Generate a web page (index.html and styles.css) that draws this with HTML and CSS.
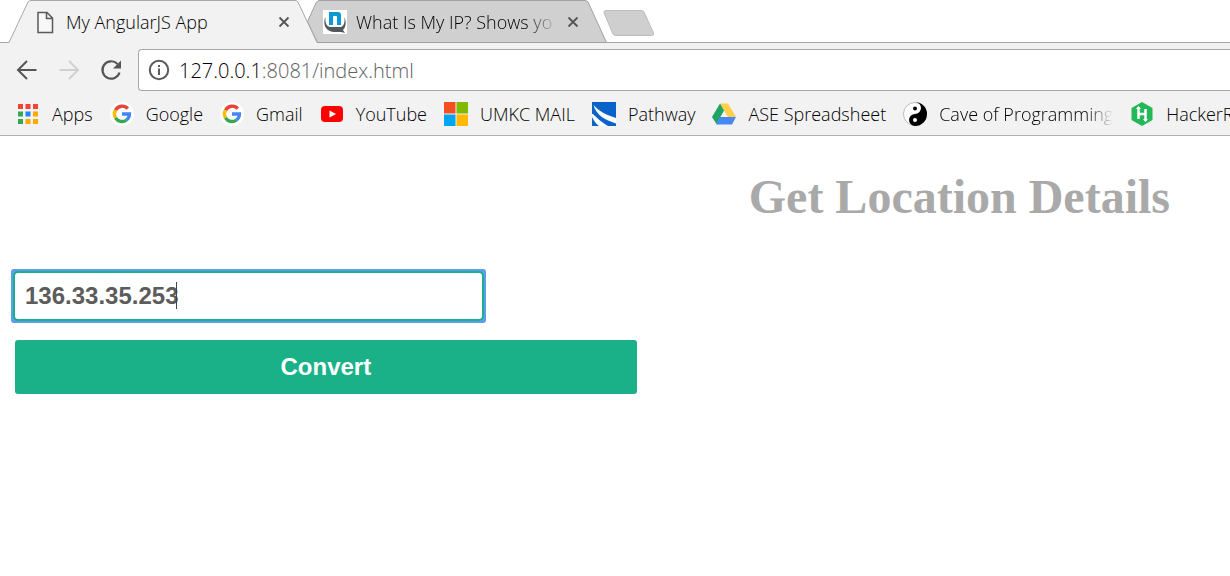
FILE: index.html
```html
<!DOCTYPE html>
<html lang="en">
<head>
<meta charset="utf-8">
<title>My AngularJS App</title>
<link rel="stylesheet" href="styles.css">
</head>
<body>
<header class="browser">
  <nav class="tabs" aria-label="Tabs">
    <div class="tab tab-active">
      <svg class="tab-shape" viewBox="0 0 310 43" preserveAspectRatio="none"><path d="M0 42.5H1L20 2Q21 .5 23 .5H287Q289 .5 290 2L309 42.5V43H0Z" fill="#f2f2f2"/><path d="M0 42.5H1L20 2Q21 .5 23 .5H287Q289 .5 290 2L309 42.5" fill="none" stroke="#a8a8a8"/></svg>
      <svg class="icon" viewBox="0 0 24 24"><path d="M5 2.5H14L19.500 8V22.500H5Z M13.500 3V8.500H19" fill="#f8f8f8" stroke="#5a5a5a" stroke-width="1.500"/></svg>
      <span class="tab-title">My AngularJS App</span>
      <button class="close" aria-label="Close tab"><svg viewBox="0 0 12 12"><path d="M1.500 1.500L10.500 10.500M10.500 1.500L1.500 10.500" stroke="#555" stroke-width="1.800"/></svg></button>
    </div>
    <div class="tab">
      <svg class="tab-shape" viewBox="0 0 300 43" preserveAspectRatio="none"><path d="M10.500 42.500L.5 21.500L9 3Q10.500 .5 12 .5H278Q280 .5 281 2L299.500 42.500Z" fill="#d0d0d0" stroke="#a0a0a0"/></svg>
      <svg class="icon" viewBox="0 0 24 24"><path d="M0 0H24V24H0Z" fill="#fff"/><path d="M2.500 7C0 12 1 22 12 22H18L22 23L20 20C23 17 23.500 12 21.500 7C22 12 21 16 18 17H7C3 16 2 12 2.500 7Z" fill="#55585b"/><path d="M6 2H15Q18 2 18 5V15H14V7Q14 6 13 6H11Q10 6 10 7V15H6Z" fill="#0b98d3"/></svg>
      <span class="tab-title tab-title-fade">What Is My IP? Shows yo</span>
      <button class="close" aria-label="Close tab"><svg viewBox="0 0 12 12"><path d="M1.500 1.500L10.500 10.500M10.500 1.500L1.500 10.500" stroke="#555" stroke-width="1.800"/></svg></button>
    </div>
    <button class="new-tab" aria-label="New tab"><svg viewBox="0 0 52 26"><path d="M3 .5H38Q40 .5 41 2L50.500 23Q51 25.500 49 25.500H13Q11 25.500 10 24L1 3Q.5 .5 3 .5Z" fill="#cfcfcf" stroke="#bdbdbd"/></svg></button>
  </nav>
  <div class="toolbar">
    <button class="tool" aria-label="Back"><svg class="icon" viewBox="0 0 24 24"><path d="M21.500 12H3M12 3L3 12L12 21" fill="none" stroke="#555" stroke-width="2"/></svg></button>
    <button class="tool" aria-label="Forward" disabled><svg class="icon" viewBox="0 0 24 24"><path d="M2.500 12H21M12 3L21 12L12 21" fill="none" stroke="#d0d0d0" stroke-width="2"/></svg></button>
    <button class="tool" aria-label="Reload"><svg class="icon" viewBox="0 0 24 24"><path d="M20.500 14.500A8.700 8.700 0 1 1 18.500 6" fill="none" stroke="#555" stroke-width="2.200"/><path d="M22 2.500V10.500H14Z" fill="#555"/></svg></button>
    <div class="address">
      <svg class="icon" viewBox="0 0 24 24"><circle cx="12" cy="12" r="9.200" fill="none" stroke="#5a5a5a" stroke-width="2"/><path d="M12 10.500V17M12 7V9" stroke="#5a5a5a" stroke-width="2"/></svg>
      <span class="url">127.0.0.1<span class="url-path">:8081/index.html</span></span>
    </div>
  </div>
  <nav class="bookmarks" aria-label="Bookmarks">
    <a class="bookmark" href="#"><svg class="icon" viewBox="0 0 24 24"><path d="M2 2h5v5H2ZM9.500 2h5v5h-5ZM17 2h5v5h-5Z" fill="#f44336"/><path d="M2 9.500h5v5H2ZM2 17h5v5H2Z" fill="#34a853"/><path d="M9.500 9.500h5v5h-5Z" fill="#1e88f5"/><path d="M17 9.500h5v5h-5ZM9.500 17h5v5h-5ZM17 17h5v5h-5Z" fill="#f9ab00"/></svg><span>Apps</span></a>
    <a class="bookmark" href="#"><svg class="icon" viewBox="0 0 24 24"><circle cx="12" cy="12" r="12" fill="#fff"/><g fill="none" stroke-width="3.400"><path d="M17.800 6.700A7.500 7.500 0 0 0 5.500 8.200" stroke="#ea4335"/><path d="M5.500 8.200A7.500 7.500 0 0 0 5.500 15.800" stroke="#fbbc05"/><path d="M5.500 15.800A7.500 7.500 0 0 0 16.500 18" stroke="#34a853"/><path d="M16.500 18A7.500 7.500 0 0 0 19.400 12H12" stroke="#4285f4"/></g></svg><span>Google</span></a>
    <a class="bookmark" href="#"><svg class="icon" viewBox="0 0 24 24"><circle cx="12" cy="12" r="12" fill="#fff"/><g fill="none" stroke-width="3.400"><path d="M17.800 6.700A7.500 7.500 0 0 0 5.500 8.200" stroke="#ea4335"/><path d="M5.500 8.200A7.500 7.500 0 0 0 5.500 15.800" stroke="#fbbc05"/><path d="M5.500 15.800A7.500 7.500 0 0 0 16.500 18" stroke="#34a853"/><path d="M16.500 18A7.500 7.500 0 0 0 19.400 12H12" stroke="#4285f4"/></g></svg><span>Gmail</span></a>
    <a class="bookmark" href="#"><svg class="icon" viewBox="0 0 24 24"><rect x="1" y="4" width="22" height="16" rx="4" fill="#f00"/><path d="M9.500 8.500L16 12L9.500 15.500Z" fill="#fff"/></svg><span>YouTube</span></a>
    <a class="bookmark" href="#"><svg class="icon" viewBox="0 0 24 24"><path d="M0 0h11.500v11.500H0Z" fill="#f25022"/><path d="M12.500 0H24v11.500H12.500Z" fill="#7fba00"/><path d="M0 12.500h11.500V24H0Z" fill="#00a4ef"/><path d="M12.500 12.500H24V24H12.500Z" fill="#ffb900"/></svg><span>UMKC MAIL</span></a>
    <a class="bookmark" href="#"><svg class="icon" viewBox="0 0 24 24"><path d="M0 0H24V24H0Z" fill="#0a63c9"/><path d="M1.500 3C7 9 14 13 24 16V21.500C13 18 4 13 1.500 3ZM1 12C4 15 9 20 16 24H0V12Z" fill="#fff"/><path d="M0 15C2 19 4 22 7 24H0Z" fill="#0a63c9"/></svg><span>Pathway</span></a>
    <a class="bookmark" href="#"><svg class="icon" viewBox="0 0 24 24"><path d="M8 1.500H16L24 15H16Z" fill="#ffcf48"/><path d="M8 1.500L12 8.500L4.500 22L0 15Z" fill="#1ea362"/><path d="M8 15H24L20 22.500H4Z" fill="#4688f4"/></svg><span>ASE Spreadsheet</span></a>
    <a class="bookmark" href="#"><svg class="icon" viewBox="0 0 24 24"><circle cx="12" cy="12" r="11.500" fill="#fff" stroke="#bbb"/><path d="M12 0A12 12 0 0 1 12 24A6 6 0 0 1 12 12A6 6 0 0 0 12 0Z" fill="#000"/><circle cx="12" cy="6.500" r="2" fill="#000"/><circle cx="12" cy="18" r="2" fill="#fff"/></svg><span class="fade">Cave of Programming</span></a>
    <a class="bookmark" href="#"><svg class="icon" viewBox="0 0 24 24"><path d="M12 0L22.500 6V18L12 24L1.500 18V6Z" fill="#24b858"/><path d="M8.500 5V17M15.500 7V19M8.500 12H15.500" stroke="#fff" stroke-width="2.500"/><path d="M6 7L8.500 4L11 7ZM13 17H18L15.500 20Z" fill="#fff"/></svg><span>HackerRank</span></a>
  </nav>
</header>
<main class="page">
  <h1 class="title">Get Location Details</h1>
  <form class="lookup">
    <div class="field">
      <input class="ip" type="text" aria-label="IP address" value="136.33.35.253">
      <span class="caret"></span>
    </div>
    <button class="convert" type="button">Convert</button>
  </form>
</main>
</body>
</html>
```
FILE: styles.css
```css
* { box-sizing: border-box; }
body { margin: 0; background: #fff; overflow-x: hidden; font-family: "Open Sans", "Noto Sans", sans-serif; font-weight: 300; color: #000; }
button { border: 0; padding: 0; background: none; font: inherit; }
svg { display: block; }
.icon { width: 24px; height: 24px; flex: none; }
.browser { background: #f2f2f2; border-bottom: 1px solid #b0b0b0; }
.tabs { display: flex; height: 43px; padding-left: 8px; background: linear-gradient(#a8a8a8, #a8a8a8) bottom / 100% 1px no-repeat #fff; }
.tab { position: relative; display: flex; align-items: center; gap: 9px; width: 300px; padding: 0 28px 0 16px; margin-left: -11px; font-size: 18px; }
.tab-active { z-index: 1; width: 310px; padding: 0 28px 0 25px; margin-left: 0; }
.tab-shape { position: absolute; inset: 0; width: 100%; height: 100%; }
.tab > :not(.tab-shape) { position: relative; }
.tab-title { flex: 1; min-width: 0; overflow: hidden; white-space: nowrap; }
.tab-title-fade { mask-image: linear-gradient(90deg, #000 84%, transparent); }
.close svg { width: 12px; height: 12px; }
.new-tab { align-self: flex-start; padding-top: 10px; margin-left: -4px; }
.new-tab svg { width: 52px; height: 26px; }
.toolbar { display: flex; align-items: center; gap: 18px; padding: 6px 0 0 15px; }
.address { display: flex; flex: 1; align-items: center; gap: 8px; height: 42px; margin-left: -3px; padding-left: 8px; background: #fff; border: 1px solid #a8a8a8; border-right: 0; border-radius: 4px 0 0 4px; font-size: 20px; }
.url-path { color: #606060; }
.bookmarks { display: flex; align-items: center; gap: 17px; height: 44px; padding: 2px 0 0 16px; overflow: hidden; font-size: 18px; }
.bookmark { display: flex; flex: none; align-items: center; gap: 12px; color: inherit; text-decoration: none; white-space: nowrap; }
.fade { mask-image: linear-gradient(90deg, #000 85%, transparent); }
.page { padding: 33px 0 0 11px; }
.title { margin: 0; padding-right: 60px; color: #a9a9a9; font: bold 48px/56px "Liberation Serif", serif; text-align: right; }
.lookup { display: flex; flex-direction: column; align-items: flex-start; gap: 17px; margin-top: 44px; font-family: "Liberation Sans", sans-serif; }
.field { position: relative; width: 39%; border: 2px solid #5b9dee; border-radius: 3px; background: #5b9dee; }
.ip { display: block; width: 100%; height: 50px; padding: 0 10px; border: 2px solid #1bb188; border-radius: 5px; background: #fff; color: #5c5c5c; font: bold 24px "Liberation Sans", sans-serif; }
.caret { position: absolute; top: 11px; left: 163px; width: 1px; height: 27px; background: #444; }
.convert { width: 51%; height: 54px; margin-left: 4px; border-radius: 3px; background: #1bb188; color: #fff; font-size: 24px; font-weight: bold; }
```
